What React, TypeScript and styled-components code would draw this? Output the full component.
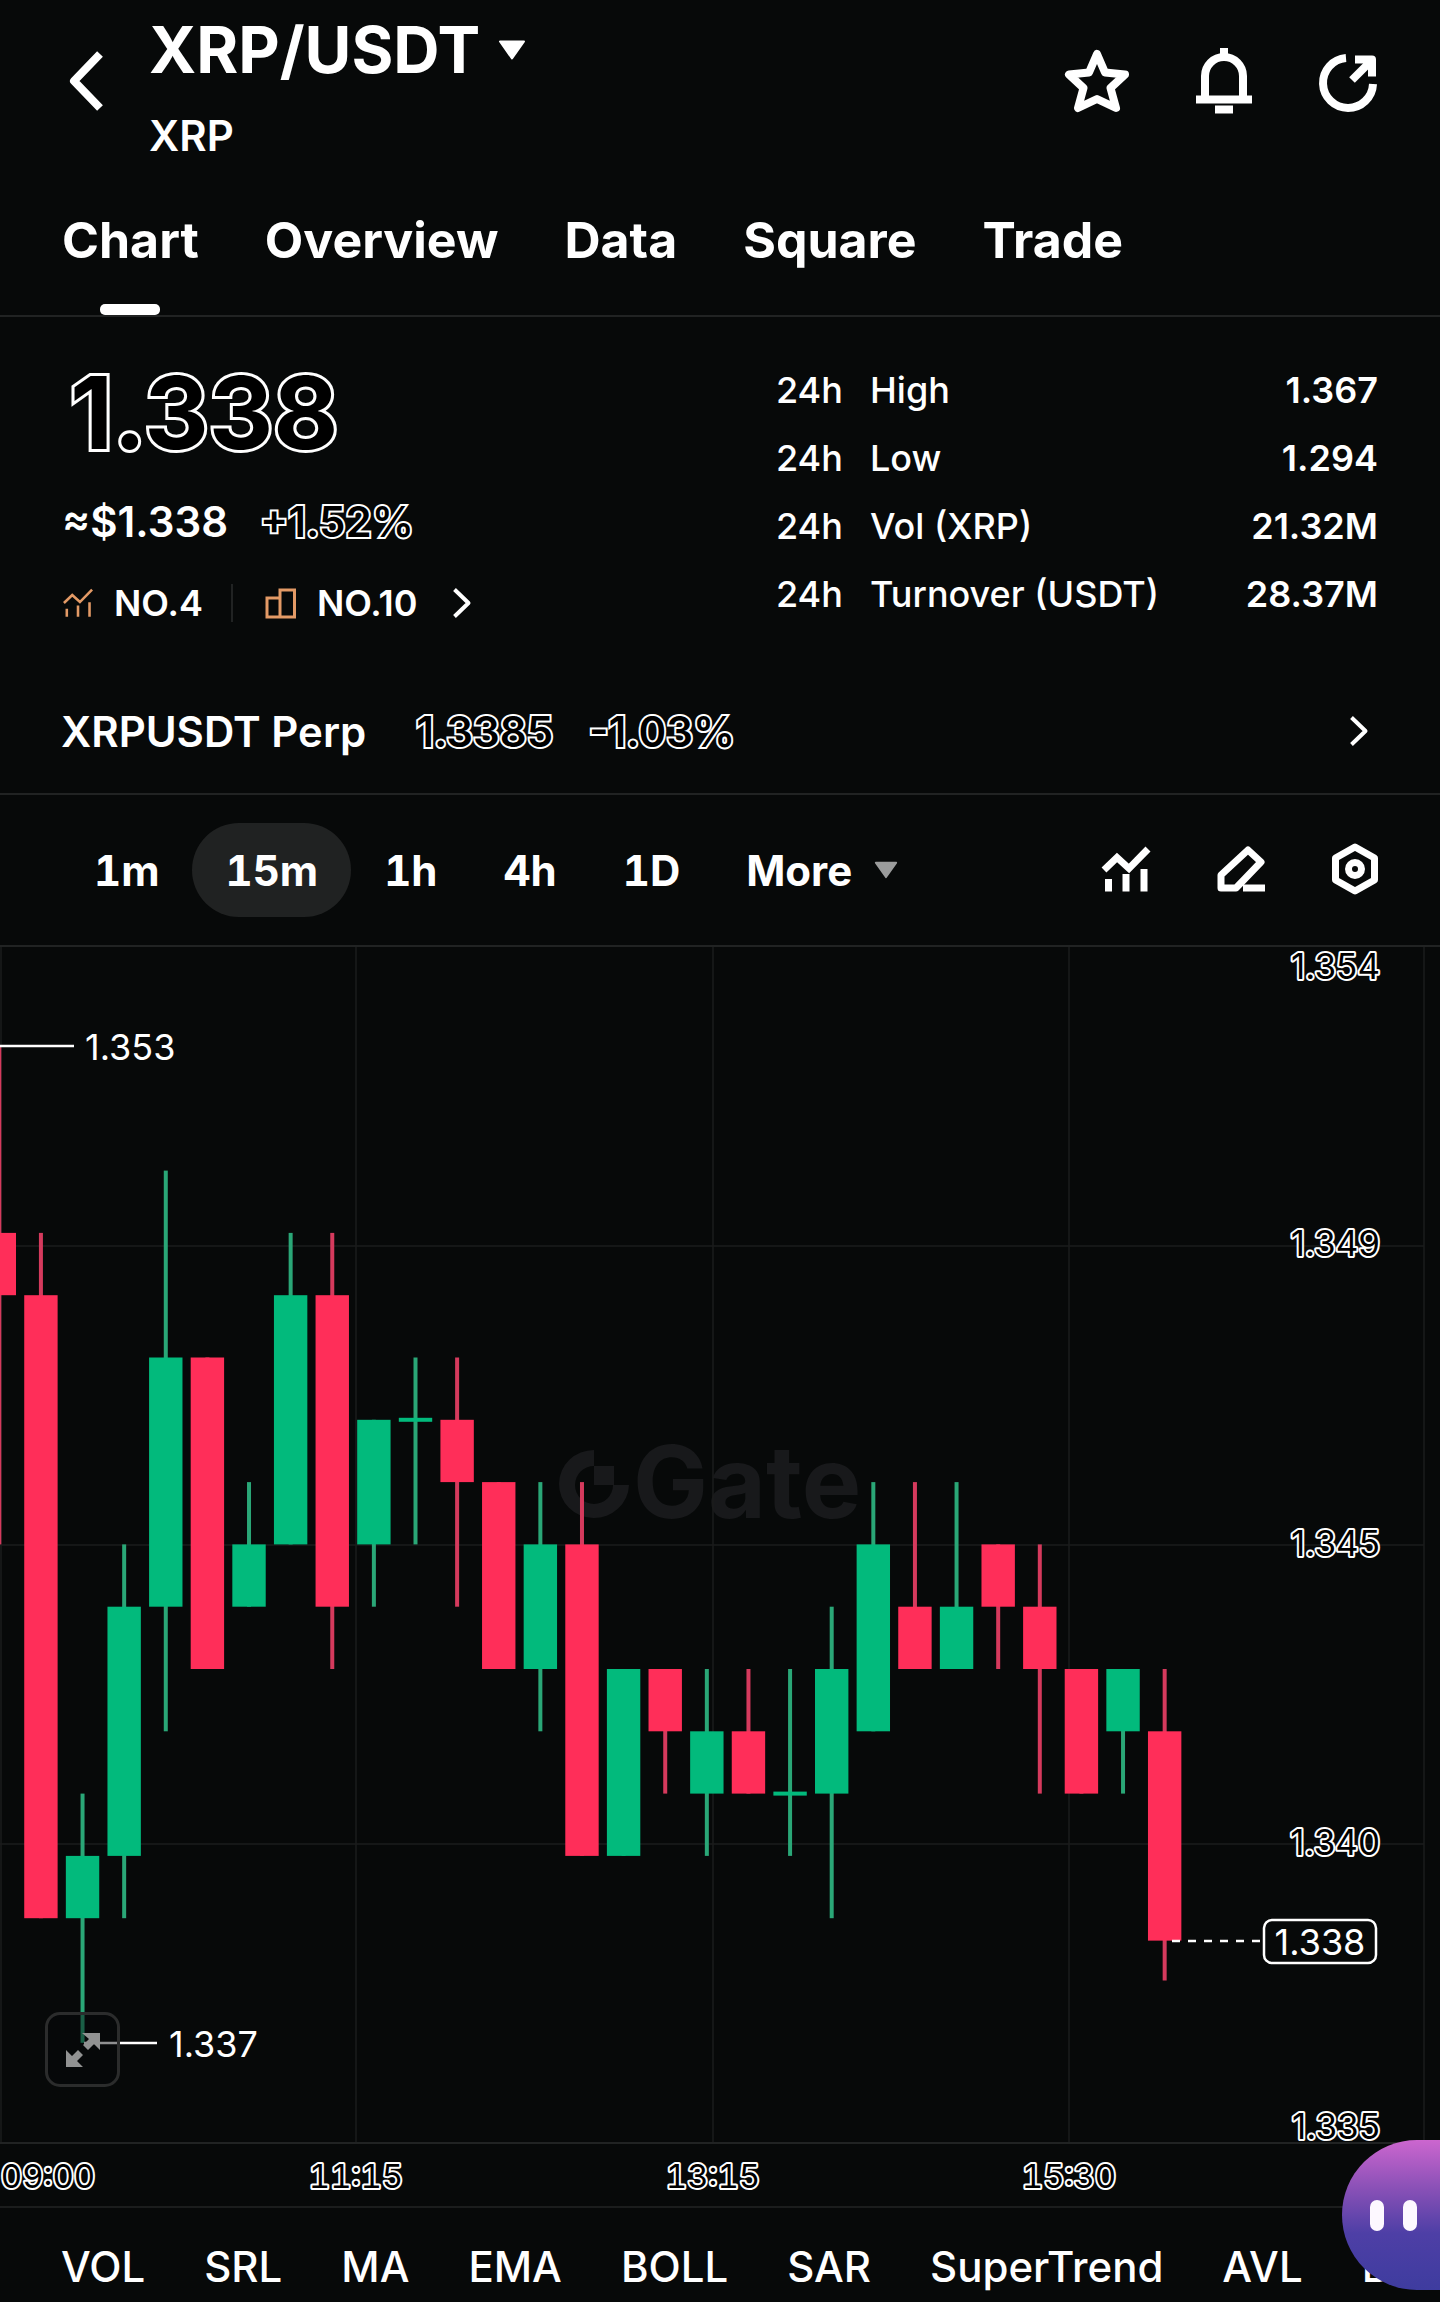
import React from "react";
import styled, { createGlobalStyle, css } from "styled-components";

const colors = {
  bg: "#070909",
  text: "#ffffff",
  line: "#212323",
  grid: "#1b1d1d",
  pill: "#202222",
  muted: "#9b9c9c",
  accent: "#e39a66",
  up: "#02ba7c",
  upWick: "#2aa777",
  down: "#ff2e59",
  downWick: "#d53a5d",
  watermark: "#18191b",
};

const GlobalStyle = createGlobalStyle`
  *, *::before, *::after { box-sizing: border-box; }
  body { margin: 0; background: ${colors.bg}; }
`;

const outlined = css<{ $stroke?: number }>`
  color: #000000;
  -webkit-text-stroke: ${(p) => p.$stroke ?? 4}px ${colors.text};
  paint-order: stroke fill;
`;

const Page = styled.main`
  position: relative;
  overflow: hidden;
  background: ${colors.bg};
  color: ${colors.text};
  font-family: Inter, "Liberation Sans", sans-serif;
`;

const PlainButton = styled.button`
  display: flex;
  align-items: center;
  padding: 0;
  border: 0;
  background: none;
  color: inherit;
  font: inherit;
  white-space: nowrap;
  cursor: pointer;
`;

const Header = styled.header`
  display: flex;
  align-items: center;
  padding: 0 62px;
`;

const BackButton = styled(PlainButton)`
  width: 87px;
`;

const PairBlock = styled.div`
  display: flex;
  flex: 1;
  flex-direction: column;
  align-items: flex-start;
  gap: 10px;
`;

const PairTitle = styled.h1`
  margin: 0;
  font-size: 64px;
  font-weight: 700;
  line-height: 100px;
`;

const PairButton = styled(PlainButton)`
  gap: 18px;
`;

const PairName = styled.div`
  font-size: 42px;
  font-weight: 600;
  line-height: 52px;
`;

const HeaderActions = styled.div`
  display: flex;
  gap: 64px;
`;

const Tabs = styled.nav`
  display: flex;
  gap: 66px;
  padding: 0 62px;
  border-bottom: 2px solid ${colors.line};
`;

const Tab = styled.a<{ $active?: boolean }>`
  position: relative;
  padding-top: 4px;
  color: inherit;
  font-size: 50px;
  font-weight: 700;
  line-height: 149px;
  text-decoration: none;

  &::after {
    content: "";
    display: ${(p) => (p.$active ? "block" : "none")};
    position: absolute;
    bottom: 0;
    left: 50%;
    width: 60px;
    height: 11px;
    margin-left: -30px;
    border-radius: 5px;
    background: ${colors.text};
  }
`;

const Summary = styled.section`
  display: flex;
  align-items: flex-start;
  justify-content: space-between;
  padding: 39px 62px 37px;
`;

const PriceColumn = styled.div`
  display: flex;
  flex-direction: column;
  gap: 14px;
`;

const LastPrice = styled.div`
  ${outlined}
  padding-left: 8px;
  font-size: 100px;
  font-weight: 700;
  line-height: 114px;
`;

const PriceRow = styled.div`
  display: flex;
  gap: 32px;
  font-size: 42px;
  font-weight: 600;
  line-height: 76px;
`;

const Change = styled.span`
  ${outlined}
`;

const RankButton = styled(PlainButton)`
  height: 58px;
  font-size: 36px;
  font-weight: 600;
`;

const RankLabel = styled.span`
  margin-left: 20px;
`;

const RankDivider = styled.span`
  width: 2px;
  height: 38px;
  margin: 0 32px 0 28px;
  background: ${colors.line};
`;

const RankArrow = styled.span`
  display: flex;
  margin-left: 34px;
`;

const StatTable = styled.table`
  width: 602px;
  border-collapse: collapse;
  font-size: 36px;
  line-height: 68px;
`;

const StatPeriod = styled.th`
  width: 94px;
  padding: 0;
  font-weight: 500;
  text-align: left;
`;

const StatName = styled.th`
  padding: 0;
  font-weight: 500;
  text-align: left;
`;

const StatValue = styled.td`
  padding: 0;
  font-weight: 600;
  text-align: right;
`;

const PerpRow = styled.a`
  display: flex;
  align-items: center;
  height: 126px;
  padding: 0 71px 0 61px;
  border-bottom: 2px solid ${colors.line};
  color: inherit;
  font-size: 42px;
  font-weight: 600;
  text-decoration: none;
`;

const PerpName = styled.span`
  margin-right: 50px;
`;

const PerpPrice = styled.span`
  ${outlined}
  margin-right: 36px;
`;

const PerpChange = styled.span`
  ${outlined}
  margin-right: auto;
`;

const Toolbar = styled.div`
  display: flex;
  align-items: center;
  justify-content: space-between;
  height: 152px;
  padding: 0 61px;
  border-bottom: 2px solid ${colors.line};
`;

const Intervals = styled.div`
  display: flex;
`;

const Interval = styled(PlainButton)<{ $active?: boolean }>`
  gap: 22px;
  height: 94px;
  padding: 0 33px;
  border-radius: 47px;
  background: ${(p) => (p.$active ? colors.pill : "transparent")};
  font-size: 42px;
  font-weight: 700;
  font-variant-numeric: tabular-nums;
`;

const ToolbarActions = styled.div`
  display: flex;
  gap: 65px;
`;

const ChartArea = styled.section`
  position: relative;
  border-bottom: 2px solid ${colors.grid};
`;

const ChartSvg = styled.svg`
  display: block;
  overflow: visible;
  width: 100%;
  height: auto;
  font-family: inherit;
  font-size: 36px;
`;

const AxisLabel = styled.text<{ $time?: boolean }>`
  fill: #000000;
  stroke: ${colors.text};
  stroke-width: 4px;
  stroke-linejoin: round;
  paint-order: stroke fill;
  font-size: ${(p) => (p.$time ? 33 : 35)}px;
  font-variant-numeric: ${(p) => (p.$time ? "tabular-nums" : "normal")};
`;

const MarkLabel = styled.text`
  fill: ${colors.text};
`;

const Watermark = styled.text`
  fill: ${colors.watermark};
  font-size: 100px;
  font-weight: 700;
`;

const ExpandButton = styled(PlainButton)`
  position: absolute;
  bottom: 119px;
  left: 45px;
  justify-content: center;
  width: 75px;
  height: 75px;
  border: 3px solid #2b2c2c;
  border-radius: 15px;
  background: rgba(7, 9, 12, 0.45);
`;

const Indicators = styled.nav`
  display: flex;
  gap: 59px;
  overflow: hidden;
  padding: 24px 0 0 61px;
`;

const Indicator = styled(PlainButton)`
  flex: none;
  font-size: 42px;
  font-weight: 500;
  line-height: 70px;
`;

const Assistant = styled(PlainButton)`
  position: absolute;
  right: 0;
  bottom: 12px;
  gap: 19px;
  width: 98px;
  height: 150px;
  padding-left: 28px;
  border-radius: 75px 0 0 75px;
  background: linear-gradient(#cc66cf, #8e52b8 30%, #4e3fa6 62%, #3e3c9f);
`;

const Eye = styled.span`
  width: 14px;
  height: 31px;
  border-radius: 7px;
  background: #fdf8ff;
`;

const TriangleDown = ({ w, h, color }: { w: number; h: number; color: string }) => (
  <svg width={w} height={h} viewBox="0 0 28 20" aria-hidden="true">
    <path d="M2 1.5h24L14 18.5z" fill={color} stroke={color} strokeWidth="2" strokeLinejoin="round" />
  </svg>
);

const ChevronRight = () => (
  <svg width="20" height="32" viewBox="0 0 20 32" fill="none" stroke="#fff" strokeWidth="4" aria-hidden="true">
    <path d="M2.500 2.500L16.500 16L2.500 29.500" strokeLinejoin="round" />
  </svg>
);

const TrendIcon = ({ size, color, stroke }: { size: number; color: string; stroke: number }) => (
  <svg width={size} height={size} viewBox="0 0 50 50" fill="none" stroke={color} strokeWidth={stroke} aria-hidden="true">
    <path d="M3 25L16 12.500L28 23.500L47 4" />
    <path d="M7.500 34v12.500M25 29v17.500M43 24v22.500" />
  </svg>
);

const intervals = ["1m", "15m", "1h", "4h", "1D"];
const tabs = ["Chart", "Overview", "Data", "Square", "Trade"];
const indicators = ["VOL", "SRL", "MA", "EMA", "BOLL", "SAR", "SuperTrend", "AVL", "BBI"];
const stats = [
  ["High", "1.367"],
  ["Low", "1.294"],
  ["Vol (XRP)", "21.32M"],
  ["Turnover (USDT)", "28.37M"],
];

type Candle = [up: 0 | 1, high: number, top: number, bottom: number, low: number];

/* Levels are counted in steps of 0.001 below the 1.353 high. */
const candles: Candle[] = [
  [0, 0, 3, 4, 8],
  [0, 3, 4, 14, 14],
  [1, 12, 13, 14, 16],
  [1, 8, 9, 13, 14],
  [1, 2, 5, 9, 11],
  [0, 5, 5, 10, 10],
  [1, 7, 8, 9, 9],
  [1, 3, 4, 8, 8],
  [0, 3, 4, 9, 10],
  [1, 6, 6, 8, 9],
  [1, 5, 6, 6, 8],
  [0, 5, 6, 7, 9],
  [0, 7, 7, 10, 10],
  [1, 7, 8, 10, 11],
  [0, 7, 8, 13, 13],
  [1, 10, 10, 13, 13],
  [0, 10, 10, 11, 12],
  [1, 10, 11, 12, 13],
  [0, 10, 11, 12, 12],
  [1, 10, 12, 12, 13],
  [1, 9, 10, 12, 14],
  [1, 7, 8, 11, 11],
  [0, 7, 9, 10, 10],
  [1, 7, 9, 10, 10],
  [0, 8, 8, 9, 10],
  [0, 8, 9, 10, 12],
  [0, 10, 10, 12, 12],
  [1, 10, 10, 11, 12],
  [0, 10, 11, 14.36, 15],
];

const levelY = (n: number) => 99 + n * 62.3;
const candleX = (i: number) => -0.7 + i * 41.62;

const yLabels: [string, number][] = [
  ["1.354", 19],
  ["1.349", 296],
  ["1.345", 596],
  ["1.340", 895],
  ["1.335", 1179],
];
const xLabels: [string, number][] = [
  ["09:00", 48],
  ["11:15", 356],
  ["13:15", 713],
  ["15:30", 1069],
];

function CandleChart() {
  return (
    <ChartSvg viewBox="0 0 1440 1259" role="img" aria-label="XRP/USDT 15 minute candles">
      <g>
        <path
          d="M594 503A35 34 0 1 0 629 538H613A19 19 0 1 1 594 519z"
          fill={colors.watermark}
        />
        <path d="M594 519h20v19h-20z" fill={colors.watermark} />
        <Watermark x="633" y="571">Gate</Watermark>
      </g>
      <g stroke={colors.grid} strokeWidth="1.500">
        {[299, 598, 897].map((y) => (
          <path key={y} d={`M0 ${y}H1424`} />
        ))}
        {[1, 356, 713, 1069, 1424].map((x) => (
          <path key={x} d={`M${x} 0V1196`} />
        ))}
        <path d="M0 1196H1440" stroke={colors.line} strokeWidth="2" />
      </g>
      {candles.map(([up, high, top, bottom, low], i) => {
        const x = candleX(i);
        const doji = top === bottom;
        return (
          <g key={i}>
            <rect
              x={x - 2}
              y={levelY(high)}
              width="4"
              height={levelY(low) - levelY(high)}
              fill={up ? colors.upWick : colors.downWick}
            />
            <rect
              x={x - 16.7}
              y={doji ? levelY(top) - 2 : levelY(top)}
              width="33.400"
              height={doji ? 4 : levelY(bottom) - levelY(top)}
              fill={up ? colors.up : colors.down}
            />
          </g>
        );
      })}
      <g stroke="#fff" strokeWidth="2.500">
        <path d="M0 99H74" />
        <path d="M84 1096H157" />
        <path d="M1172 994H1263" strokeDasharray="8 8" />
      </g>
      <MarkLabel x="85" y="113">1.353</MarkLabel>
      <MarkLabel x="169" y="1110">1.337</MarkLabel>
      <rect x="1264" y="973" width="112" height="43" rx="8" fill={colors.bg} stroke="#fff" strokeWidth="2.500" />
      <MarkLabel x="1320" y="1008" textAnchor="middle">1.338</MarkLabel>
      {yLabels.map(([label, y]) => (
        <AxisLabel key={label} x="1380" y={y + 13} textAnchor="end">{label}</AxisLabel>
      ))}
      {xLabels.map(([label, x]) => (
        <AxisLabel key={label} $time x={x} y="1241" textAnchor="middle">{label}</AxisLabel>
      ))}
    </ChartSvg>
  );
}

export default function App() {
  return (
    <>
      <GlobalStyle />
      <Page>
        <Header>
          <BackButton aria-label="Back">
            <svg width="44" height="62" viewBox="0 0 44 62" fill="none" stroke="#fff" strokeWidth="8">
              <path d="M38 4L12 31L38 58" strokeLinejoin="round" />
            </svg>
          </BackButton>
          <PairBlock>
            <PairTitle>
              <PairButton>
                XRP/USDT
                <TriangleDown w={28} h={20} color="#fff" />
              </PairButton>
            </PairTitle>
            <PairName>XRP</PairName>
          </PairBlock>
          <HeaderActions>
            <PlainButton aria-label="Add to favourites">
              <svg width="66" height="66" viewBox="0 0 66 66" fill="none" stroke="#fff" strokeWidth="8" strokeLinejoin="round">
                <path d="M33 6L41 24.500L61 26.500L46.500 40L52 60L33 51L14 60L19.500 40L5 26.500L25 24.500z" />
              </svg>
            </PlainButton>
            <PlainButton aria-label="Price alerts">
              <svg width="60" height="66" viewBox="0 0 60 66" fill="none" stroke="#fff" strokeWidth="8">
                <path d="M11 50V28A19 19 0 0 1 49 28V50" />
                <path d="M2 51.500H58" />
                <path d="M30 0V8" />
                <path d="M21 61.500H39" />
              </svg>
            </PlainButton>
            <PlainButton aria-label="Share">
              <svg width="60" height="66" viewBox="0 0 60 66" fill="none" stroke="#fff" strokeWidth="8">
                <path d="M28 10A25 25 0 1 0 55 36" />
                <path d="M34 32L53 13" />
                <path d="M37 11.500H54V28.500" strokeLinejoin="round" />
                <path d="M42 12H53V24z" fill="#fff" stroke="none" />
              </svg>
            </PlainButton>
          </HeaderActions>
        </Header>

        <Tabs>
          {tabs.map((tab) => (
            <Tab key={tab} href={`#${tab.toLowerCase()}`} $active={tab === "Chart"}>
              {tab}
            </Tab>
          ))}
        </Tabs>

        <Summary>
          <PriceColumn>
            <LastPrice $stroke={6}>1.338</LastPrice>
            <PriceRow>
              <span>≈$1.338</span>
              <Change>+1.52%</Change>
            </PriceRow>
            <RankButton>
              <TrendIcon size={32} color={colors.accent} stroke={4} />
              <RankLabel>NO.4</RankLabel>
              <RankDivider />
              <svg width="32" height="32" viewBox="0 0 32 32" fill="none" stroke={colors.accent} strokeWidth="3" aria-hidden="true">
                <path d="M2 30V11H15V30zM15 30V3H29.500V30z" />
              </svg>
              <RankLabel>NO.10</RankLabel>
              <RankArrow>
                <ChevronRight />
              </RankArrow>
            </RankButton>
          </PriceColumn>
          <StatTable>
            <tbody>
              {stats.map(([name, value]) => (
                <tr key={name}>
                  <StatPeriod scope="row">24h</StatPeriod>
                  <StatName scope="row">{name}</StatName>
                  <StatValue>{value}</StatValue>
                </tr>
              ))}
            </tbody>
          </StatTable>
        </Summary>

        <PerpRow href="#perp">
          <PerpName>XRPUSDT Perp</PerpName>
          <PerpPrice>1.3385</PerpPrice>
          <PerpChange>-1.03%</PerpChange>
          <ChevronRight />
        </PerpRow>

        <Toolbar>
          <Intervals>
            {intervals.map((label) => (
              <Interval key={label} $active={label === "15m"}>
                {label}
              </Interval>
            ))}
            <Interval>
              More
              <TriangleDown w={24} h={18} color={colors.muted} />
            </Interval>
          </Intervals>
          <ToolbarActions>
            <PlainButton aria-label="Chart indicators">
              <TrendIcon size={50} color="#fff" stroke={7} />
            </PlainButton>
            <PlainButton aria-label="Drawing tools">
              <svg width="50" height="50" viewBox="0 0 50 50" fill="none" stroke="#fff" strokeWidth="7">
                <path d="M32 5L45 17L20 43H5V30z" strokeLinejoin="round" />
                <path d="M27 43H49" />
              </svg>
            </PlainButton>
            <PlainButton aria-label="Chart settings">
              <svg width="48" height="54" viewBox="0 0 48 54" fill="none" stroke="#fff" strokeWidth="7" strokeLinejoin="round">
                <path d="M24 4L43.500 15V37L24 48L4.500 37V15z" />
                <circle cx="24" cy="26" r="6.500" />
              </svg>
            </PlainButton>
          </ToolbarActions>
        </Toolbar>

        <ChartArea>
          <CandleChart />
          <ExpandButton aria-label="Full screen chart">
            <svg width="34" height="34" viewBox="0 0 34 34" fill="#919292">
              <path d="M16 0H34V17L28 11L22 17L17 12L23 6z" />
              <path d="M0 17L6 23L12 17L17 22L11 28L17 34H0z" />
            </svg>
          </ExpandButton>
        </ChartArea>

        <Indicators>
          {indicators.map((name) => (
            <Indicator key={name}>{name}</Indicator>
          ))}
        </Indicators>

        <Assistant aria-label="Open assistant">
          <Eye />
          <Eye />
        </Assistant>
      </Page>
    </>
  );
}
